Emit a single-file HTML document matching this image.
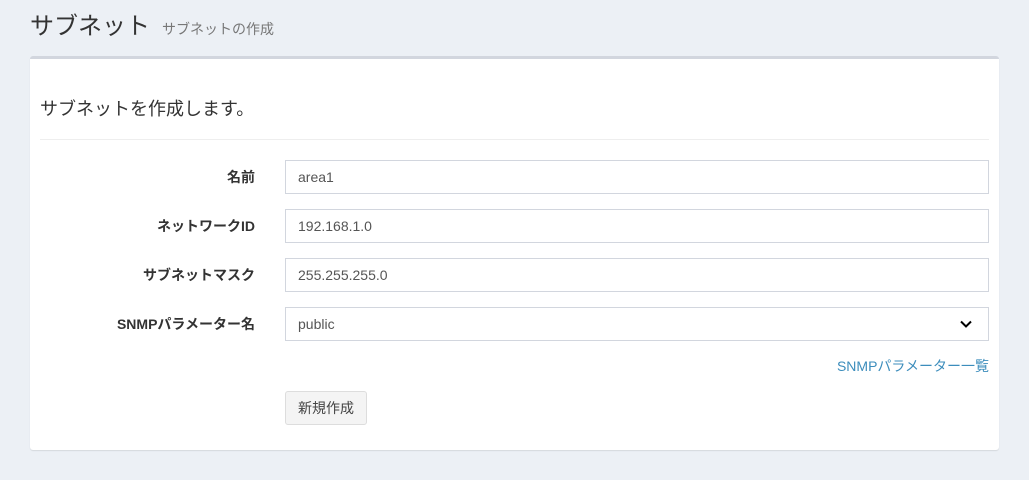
<!DOCTYPE html>
<html><head><meta charset="utf-8"><style>
*{box-sizing:border-box;margin:0;padding:0}
body{width:1029px;height:480px;background:#ecf0f5;font-family:"Liberation Sans","Noto Sans CJK JP",sans-serif;color:#333;position:relative;overflow:hidden;font-size:14px}
.t{position:absolute;left:30px;top:11px;font-size:24px;color:#333;line-height:32px}
.t small{font-size:14px;color:#777;margin-left:12px}
.box{position:absolute;left:30px;top:56px;width:969px;height:394px;background:#fff;border-top:3px solid #d2d6de;border-radius:3px;box-shadow:0 1px 1px rgba(0,0,0,.1)}
.h{position:absolute;left:10px;top:38px;font-size:18px;line-height:24px}
.hr{position:absolute;left:10px;right:10px;top:80px;border-top:1px solid #eee}
.lb{position:absolute;right:744px;font-weight:bold;font-size:14px;line-height:20px;text-align:right}
.in{position:absolute;left:255px;width:704px;height:34px;border:1px solid #d2d6de;padding:0 12px;line-height:32px;font-size:14px;color:#555}
.a{position:absolute;right:10px;top:297px;color:#3c8dbc;font-size:14px;line-height:20px}
.btn{position:absolute;left:255px;top:332px;width:82px;height:34px;background:#f4f4f4;border:1px solid #ddd;border-radius:3px;font-size:14px;line-height:32px;text-align:center;color:#444}
</style></head><body>
<div class="t">サブネット<small>サブネットの作成</small></div>
<div class="box">
<div class="h">サブネットを作成します。</div>
<div class="hr"></div>
<div class="lb" style="top:108px">名前</div><div class="in" style="top:101px">area1</div>
<div class="lb" style="top:157px">ネットワークID</div><div class="in" style="top:150px">192.168.1.0</div>
<div class="lb" style="top:206px">サブネットマスク</div><div class="in" style="top:199px">255.255.255.0</div>
<div class="lb" style="top:255px">SNMPパラメーター名</div><div class="in" style="top:248px">public
<svg style="position:absolute;right:16px;top:12px" width="12" height="8" viewBox="0 0 12 8"><path d="M1 1.5L6 6.5L11 1.5" fill="none" stroke="#000" stroke-width="2"/></svg></div>
<div class="a">SNMPパラメーター一覧</div>
<div class="btn">新規作成</div>
</div>
</body></html>
